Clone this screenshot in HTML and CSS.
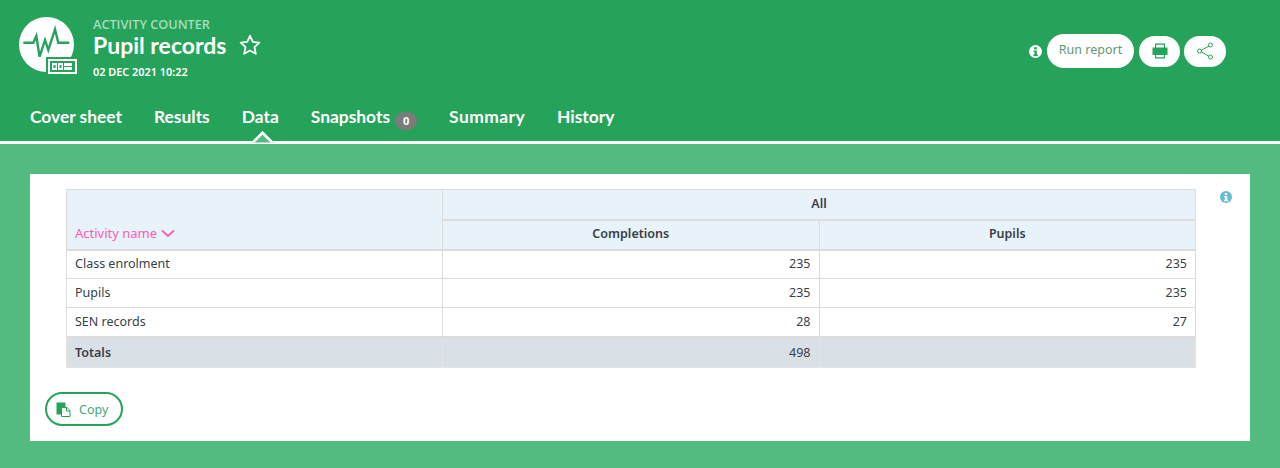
FILE: index.html
```html
<!DOCTYPE html>
<html lang="en">
<head>
  <meta charset="UTF-8">
  <title>Pupil records</title>
  <link rel="stylesheet" href="styles.css">
</head>
<body>

<header class="header">
  <div class="header-top">
    <div class="logo">
      <svg width="58" height="60" viewBox="0 0 58 60">
        <circle cx="27.5" cy="27.5" r="27.5" fill="#fff"/>
        <path d="M4.3 25.7H14.3L17.3 19L20.6 39.7L26 23L29.3 33L36 12.3L39.3 25.7H50.3" fill="none" stroke="#26a35b" stroke-width="2.4"/>
        <rect x="27" y="40" width="31" height="18" fill="#26a35b"/>
        <rect x="29" y="42" width="29" height="15" fill="#fff"/>
        <rect x="31" y="44" width="25" height="11" fill="#26a35b"/>
        <rect x="33" y="46" width="5" height="7" fill="#fff"/>
        <rect x="39" y="46" width="5" height="7" fill="#fff"/>
        <rect x="45" y="46" width="8" height="7" fill="#fff"/>
        <rect x="34.5" y="48" width="2" height="3" fill="#26a35b"/>
        <rect x="40.5" y="48" width="2" height="3" fill="#26a35b"/>
        <rect x="45" y="49" width="8" height="1" fill="#26a35b"/>
      </svg>
    </div>
    <div class="titles">
      <div class="kicker">ACTIVITY COUNTER</div>
      <div class="title-row">
        <h1>Pupil records</h1>
        <svg class="star" width="22" height="22" viewBox="0 0 22 22">
          <path d="M11 1.8L13.8 7.9L20.3 8.7L15.5 13.2L16.8 19.8L11 16.5L5.2 19.8L6.5 13.2L1.7 8.7L8.2 7.9Z" fill="none" stroke="#fff" stroke-width="1.8" stroke-linejoin="round"/>
        </svg>
      </div>
      <div class="stamp">02 DEC 2021 10:22</div>
    </div>
    <div class="actions">
      <svg class="info" width="13" height="13" viewBox="0 0 13 13">
        <circle cx="6.5" cy="6.5" r="6.5" fill="#fff"/>
        <rect x="5.2" y="2.2" width="2.6" height="2.2" fill="#26a35b"/>
        <path d="M4.4 5.4H7.8V9.6H8.8V11H4.4V9.6H5.4V6.8H4.4Z" fill="#26a35b"/>
      </svg>
      <button class="pill run">Run report</button>
      <button class="pill icon-pill print">
        <svg width="16" height="16" viewBox="0 0 16 16">
          <path d="M3 5V0.5H13V5H11.8V1.7H4.2V5Z" fill="#26a35b"/>
          <path d="M0.5 4.5H15.5V12H0.5Z" fill="#26a35b"/>
          <path d="M3 12V15.5H13V12H11.8V14.3H4.2V12Z" fill="#26a35b"/>
        </svg>
      </button>
      <button class="pill icon-pill share">
        <svg width="18" height="18" viewBox="0 0 18 18">
          <path d="M14 3.5L4 9L14 15" fill="none" stroke="#26a35b"/>
          <circle cx="14.5" cy="3" r="2" fill="#fff" stroke="#26a35b"/>
          <circle cx="3.5" cy="9" r="2" fill="#fff" stroke="#26a35b"/>
          <circle cx="14.5" cy="15" r="2" fill="#fff" stroke="#26a35b"/>
        </svg>
      </button>
    </div>
  </div>
  <nav class="tabs">
    <a>Cover sheet</a>
    <a>Results</a>
    <a class="active">Data</a>
    <a>Snapshots<span class="badge">0</span></a>
    <a class="wide">Summary</a>
    <a>History</a>
  </nav>
</header>

<main class="card">
  <div class="table-row">
    <table class="data">
      <colgroup>
        <col class="col-name">
        <col>
        <col>
      </colgroup>
      <thead>
        <tr>
          <th rowspan="2" class="sort-head">
            Activity name
            <svg width="14" height="9" viewBox="0 0 14 9"><path d="M1 1.5L7 7L13 1.5" fill="none" stroke="#fb5cb8" stroke-width="1.7"/></svg>
          </th>
          <th colspan="2">All</th>
        </tr>
        <tr class="head-low">
          <th>Completions</th>
          <th>Pupils</th>
        </tr>
      </thead>
      <tbody>
        <tr><td>Class enrolment</td><td class="num">235</td><td class="num">235</td></tr>
        <tr><td>Pupils</td><td class="num">235</td><td class="num">235</td></tr>
        <tr class="last-row"><td>SEN records</td><td class="num">28</td><td class="num">27</td></tr>
      </tbody>
      <tfoot>
        <tr><td class="total-label">Totals</td><td class="num">498</td><td></td></tr>
      </tfoot>
    </table>
    <svg class="table-info" width="12" height="12" viewBox="0 0 13 13">
      <circle cx="6.5" cy="6.5" r="6.5" fill="#62bcdc"/>
      <rect x="5.2" y="2.2" width="2.6" height="2.2" fill="#fff"/>
      <path d="M4.4 5.4H7.8V9.6H8.8V11H4.4V9.6H5.4V6.8H4.4Z" fill="#fff"/>
    </svg>
  </div>
  <button class="copy">
    <svg width="15" height="15" viewBox="0 0 15 15">
      <rect x="0.5" y="0.5" width="9" height="12" fill="#26a35b"/>
      <path d="M5.5 5.5H11L14 8.5V14.5H5.5Z" fill="#fff" stroke="#26a35b"/>
      <path d="M10.5 5.5V9H14" fill="none" stroke="#26a35b"/>
    </svg>
    Copy
  </button>
</main>

</body>
</html>
```

FILE: styles.css
```css
* {
  box-sizing: border-box;
}
html, body {
  height: 100%;
}
body {
  margin: 0;
  background-color: #54bb80;
  font-family: "Noto Sans", "Open Sans", sans-serif;
  color: #3a3f4a;
  overflow: hidden;
}

/* header */
.header {
  height: 144px;
  background-color: #26a35b;
  border-bottom: 3px solid #fff;
  color: #fff;
}
.header-top {
  display: flex;
  height: 100px;
  padding: 17px 54px 0 19px;
}
.logo {
  width: 58px;
  height: 60px;
  margin-right: 16px;
}
.kicker {
  margin-top: -1px;
  font-family: "Open Sans", sans-serif;
  font-size: 12.7px;
  font-weight: 600;
  line-height: 16px;
  color: #a9dcbd;
}
.title-row {
  display: flex;
  align-items: center;
  gap: 13px;
  height: 26px;
}
h1 {
  margin: 0;
  font-family: Lato, sans-serif;
  font-size: 23px;
  font-weight: 700;
  line-height: 26px;
}
.star {
  display: block;
}
.stamp {
  margin-top: 7px;
  font-size: 10.9px;
  font-weight: 600;
  line-height: 14px;
}
.actions {
  display: flex;
  align-items: center;
  margin-left: auto;
  height: 34px;
  margin-top: 17px;
  gap: 4px;
}
.pill {
  display: flex;
  align-items: center;
  justify-content: center;
  border: none;
  border-radius: 17px;
  background-color: #fff;
  font-family: "Noto Sans", sans-serif;
  padding: 0;
}
.run {
  width: 87px;
  height: 34px;
  margin: 0 1px;
  padding-bottom: 3px;
  font-size: 12.5px;
  color: #5d9a73;
}
.icon-pill {
  height: 31px;
}
.print {
  width: 41px;
}
.share {
  width: 42px;
}

/* tabs */
.tabs {
  display: flex;
  gap: 32px;
  padding-left: 30px;
}
.tabs a {
  position: relative;
  height: 41px;
  font-family: Lato, sans-serif;
  font-size: 17.4px;
  font-weight: 700;
  line-height: 34px;
}
.tabs a.wide {
  letter-spacing: 0.45px;
}
.tabs a.active::after {
  content: "";
  position: absolute;
  left: 50%;
  bottom: -10px;
  width: 14px;
  height: 14px;
  margin-left: -6px;
  background-color: #54bb80;
  border-top: 3px solid #fff;
  border-left: 3px solid #fff;
  transform: rotate(45deg);
  clip-path: polygon(0 0, 100% 0, 0 100%);
}
.badge {
  display: inline-block;
  width: 22px;
  height: 18px;
  margin-left: 5px;
  border-radius: 9px;
  background-color: #7b7b7b;
  font-family: "Noto Sans", sans-serif;
  font-size: 11px;
  line-height: 18px;
  text-align: center;
  vertical-align: -2px;
}

/* card */
.card {
  height: 267px;
  margin: 30px 30px 0;
  padding: 15px 0 0 36px;
  background-color: #fff;
}
.table-row {
  display: flex;
  align-items: flex-start;
}
.table-info {
  margin: 2px 0 0 24px;
}
.data {
  width: 1130px;
  border-collapse: collapse;
  table-layout: fixed;
  font-size: 12.5px;
}
.col-name {
  width: 376px;
}
.data th, .data td {
  border: 1px solid #dcdcdc;
  padding: 0 8px 2px;
}
.data th {
  height: 30px;
  background-color: #e7f2f9;
  font-weight: 600;
  text-align: center;
}
.head-low th {
  border-top-width: 2px;
  border-bottom-width: 2px;
}
.data th.sort-head {
  border-bottom-width: 2px;
  padding-bottom: 7px;
  vertical-align: bottom;
  text-align: left;
  font-size: 13px;
  font-weight: 400;
  color: #fb5cb8;
}
.sort-head svg {
  margin-left: 1px;
}
.data td {
  height: 29px;
}
.data .last-row td {
  padding-bottom: 0;
}
.num {
  text-align: right;
}
.data tfoot td {
  height: 31px;
  padding-bottom: 0;
  background-color: #d9e0e6;
  border: 1px solid #e2e4e6;
  border-top: 2px solid #dcdcdc;
}
.total-label {
  font-weight: 600;
}

/* copy button */
.copy {
  display: flex;
  align-items: center;
  gap: 8px;
  width: 78px;
  height: 34px;
  margin: 24px 0 0 -21px;
  padding: 0 0 0 9px;
  border: 2px solid #26a35b;
  border-radius: 17px;
  background-color: #fff;
  font-family: "Noto Sans", sans-serif;
  font-size: 12.5px;
  color: #4aa77a;
}
```
